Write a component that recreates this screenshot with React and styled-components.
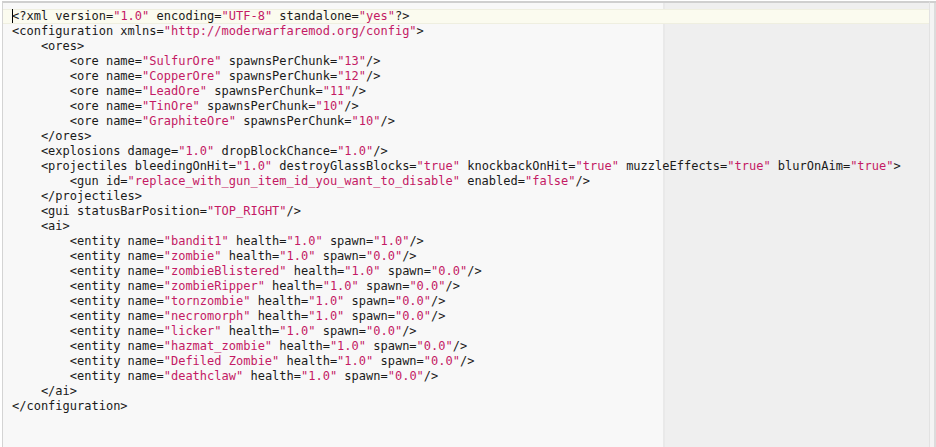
import React from "react";
import styled, { createGlobalStyle } from "styled-components";

const Global = createGlobalStyle`
  body {
    margin: 0;
    background: #ffffff;
  }
`;

const Frame = styled.div`
  display: flex;
  height: 447px;
  width: 936px;
  box-sizing: border-box;
  padding-top: 1px;
`;

const Editor = styled.div`
  flex: 1;
  display: flex;
  flex-direction: column;
  padding-top: 6px;
  border-top: 2px solid #cfcfcf;
  border-left: 1px solid #d4d4d4;
  margin-left: 2px;
  background: linear-gradient(
    to right,
    #f8f8f8 660px,
    #e9e9e9 660px 662px,
    #efefef 662px
  );
  font-family: "DejaVu Sans Mono", "Liberation Mono", monospace;
  font-size: 12px;
  color: #1a1a1a;
`;

const Line = styled.div`
  height: 15px;
  line-height: 15px;
  padding-left: 9px;
  white-space: pre;
  box-sizing: border-box;
  background: ${(p) => (p.$active ? "#fbfbef" : "transparent")};
  box-shadow: ${(p) =>
    p.$active ? "inset 0 1px 0 #efefe0, inset 0 -1px 0 #efefe0" : "none"};
`;

const Cursor = styled.span`
  display: inline-block;
  width: 1px;
  height: 14px;
  margin-right: -1px;
  vertical-align: -3px;
  background: #000;
`;

const Value = styled.span`
  color: #c41a64;
`;

const Scrollbar = styled.div`
  width: 6px;
  border-top: 2px solid #cfcfcf;
  border-left: 1px solid #e2e2e2;
  box-shadow: inset -2px 0 0 #dcdcdc;
  background: #f4f4f4;
`;

const source = [
  `<?xml version="1.0" encoding="UTF-8" standalone="yes"?>`,
  `<configuration xmlns="http://moderwarfaremod.org/config">`,
  `    <ores>`,
  `        <ore name="SulfurOre" spawnsPerChunk="13"/>`,
  `        <ore name="CopperOre" spawnsPerChunk="12"/>`,
  `        <ore name="LeadOre" spawnsPerChunk="11"/>`,
  `        <ore name="TinOre" spawnsPerChunk="10"/>`,
  `        <ore name="GraphiteOre" spawnsPerChunk="10"/>`,
  `    </ores>`,
  `    <explosions damage="1.0" dropBlockChance="1.0"/>`,
  `    <projectiles bleedingOnHit="1.0" destroyGlassBlocks="true" knockbackOnHit="true" muzzleEffects="true" blurOnAim="true">`,
  `        <gun id="replace_with_gun_item_id_you_want_to_disable" enabled="false"/>`,
  `    </projectiles>`,
  `    <gui statusBarPosition="TOP_RIGHT"/>`,
  `    <ai>`,
  `        <entity name="bandit1" health="1.0" spawn="1.0"/>`,
  `        <entity name="zombie" health="1.0" spawn="0.0"/>`,
  `        <entity name="zombieBlistered" health="1.0" spawn="0.0"/>`,
  `        <entity name="zombieRipper" health="1.0" spawn="0.0"/>`,
  `        <entity name="tornzombie" health="1.0" spawn="0.0"/>`,
  `        <entity name="necromorph" health="1.0" spawn="0.0"/>`,
  `        <entity name="licker" health="1.0" spawn="0.0"/>`,
  `        <entity name="hazmat_zombie" health="1.0" spawn="0.0"/>`,
  `        <entity name="Defiled Zombie" health="1.0" spawn="0.0"/>`,
  `        <entity name="deathclaw" health="1.0" spawn="0.0"/>`,
  `    </ai>`,
  `</configuration>`,
];

// split a line into plain text and quoted attribute values
function highlight(text) {
  return text.split(/("[^"]*")/).map((part, i) =>
    part.startsWith('"') ? <Value key={i}>{part}</Value> : part
  );
}

export default function App() {
  return (
    <>
      <Global />
      <Frame>
        <Editor>
          {source.map((text, i) => (
            <Line key={i} $active={i === 0}>
              {i === 0 && <Cursor />}
              {highlight(text)}
            </Line>
          ))}
        </Editor>
        <Scrollbar />
      </Frame>
    </>
  );
}
